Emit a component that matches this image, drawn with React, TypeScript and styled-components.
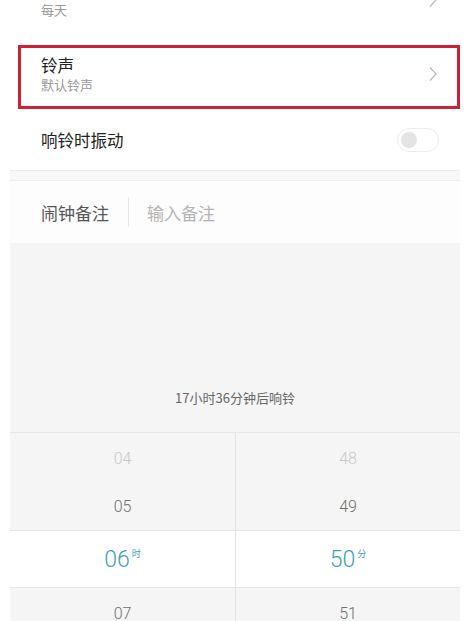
import styled, { createGlobalStyle } from 'styled-components';

const GlobalStyle = createGlobalStyle`
  html, body {
    margin: 0;
    padding: 0;
    background: #fff;
  }
  body {
    font-family: "Noto Sans CJK SC", "Noto Sans", sans-serif;
  }
`;

const Page = styled.div`
  width: 470px;
  height: 621px;
  overflow: hidden;
  background: #fff;
  padding: 0 10px;
  box-sizing: border-box;
`;

const Settings = styled.div`
  display: flex;
  flex-direction: column;
`;

const Row = styled.div<{ $height: number; $lift?: number }>`
  position: relative;
  height: ${props => props.$height}px;
  display: flex;
  align-items: center;
  justify-content: space-between;
  padding: 0 22px ${props => props.$lift ?? 0}px 31px;
  box-sizing: border-box;
`;

const TopRow = styled.div`
  height: 45px;
  display: flex;
  align-items: flex-start;
  justify-content: space-between;
  padding: 1px 22px 0 31px;
  box-sizing: border-box;

  svg {
    margin-top: -9px;
  }
`;

const Highlight = styled.div`
  position: absolute;
  left: 8px;
  right: 0;
  top: 0;
  bottom: 0;
  border: 3px solid #cf2037;
  pointer-events: none;
`;

const Texts = styled.div`
  display: flex;
  flex-direction: column;
`;

const Title = styled.div`
  font-size: 16.5px;
  line-height: 22px;
  color: #222;
`;

const Subtitle = styled.div`
  font-size: 13px;
  line-height: 18px;
  color: #999;
`;

const Chevron = () => (
  <svg width="10" height="16" viewBox="0 0 10 16" fill="none">
    <path d="M2 1.5 L8 8 L2 14.5" stroke="#b8b8b8" strokeWidth="1.2" />
  </svg>
);

const Toggle = styled.div`
  width: 42px;
  height: 24px;
  border-radius: 12px;
  border: 1px solid #ececec;
  background: #fff;
  box-sizing: border-box;
  display: flex;
  align-items: center;
  padding-left: 3px;
  margin-right: -1px;

  &::before {
    content: '';
    width: 16px;
    height: 16px;
    border-radius: 50%;
    background: #e4e4e4;
  }
`;

const Band = styled.div`
  height: 9px;
  background: #f8f8f8;
  border-top: 1px solid #ededed;
  border-bottom: 1px solid #ededed;
`;

const NoteRow = styled.div`
  height: 62px;
  display: flex;
  align-items: center;
  padding-left: 31px;
  font-size: 17px;
  background: #fdfdfd;
`;

const NoteLabel = styled.span`
  color: #555;
`;

const NoteDivider = styled.div`
  width: 1px;
  height: 30px;
  background: #e6e6e6;
  margin: 0 18px 0 19px;
`;

const NoteInput = styled.span`
  color: #b4b4b4;
`;

const Countdown = styled.div`
  height: 190px;
  background: #f5f5f5;
  display: flex;
  align-items: flex-end;
  justify-content: center;
  padding-bottom: 25px;
  box-sizing: border-box;
  border-bottom: 1px solid #e8e8e8;
  font-size: 13px;
  color: #666;
`;

const Picker = styled.div`
  display: grid;
  grid-template-columns: 226px 1fr;
  background: #f5f5f5;
`;

const Column = styled.div<{ $divider?: boolean }>`
  display: flex;
  flex-direction: column;
  border-right: ${props => (props.$divider ? '1px solid #e4e4e4' : 'none')};
`;

const Cell = styled.div<{ $height: number; $tone: 'faint' | 'normal' | 'active' }>`
  height: ${props => props.$height}px;
  display: flex;
  align-items: center;
  justify-content: center;
  font-family: Roboto, "Noto Sans CJK SC", sans-serif;
  font-weight: 300;
  font-size: ${props => (props.$tone === 'active' ? '23px' : '16px')};
  color: ${props =>
    props.$tone === 'active' ? '#3f9fb3' : props.$tone === 'faint' ? '#c8c8c8' : '#6f6f6f'};
  background: ${props => (props.$tone === 'active' ? '#fff' : 'transparent')};
  border-top: ${props => (props.$tone === 'active' ? '1px solid #e6e6e6' : 'none')};
  border-bottom: ${props => (props.$tone === 'active' ? '1px solid #e6e6e6' : 'none')};
  box-sizing: border-box;
`;

const Unit = styled.span`
  font-family: "Noto Sans CJK SC", sans-serif;
  font-size: 9px;
  line-height: 10px;
  font-weight: 400;
  margin: 0 0 11px 2px;
`;

const hours = ['04', '05', '06', '07'];
const minutes = ['48', '49', '50', '51'];
const heights = [50, 47, 58, 50];
const tones: Array<'faint' | 'normal' | 'active'> = ['faint', 'normal', 'active', 'normal'];

export default function App() {
  return (
    <>
      <GlobalStyle />
      <Page>
        <Settings>
          <TopRow>
            <Subtitle>每天</Subtitle>
            <Chevron />
          </TopRow>
          <Row $height={64} $lift={6}>
            <Texts>
              <Title>铃声</Title>
              <Subtitle>默认铃声</Subtitle>
            </Texts>
            <Chevron />
            <Highlight />
          </Row>
          <Row $height={61}>
            <Title>响铃时振动</Title>
            <Toggle />
          </Row>
        </Settings>
        <Band />
        <NoteRow>
          <NoteLabel>闹钟备注</NoteLabel>
          <NoteDivider />
          <NoteInput>输入备注</NoteInput>
        </NoteRow>
        <Countdown>17小时36分钟后响铃</Countdown>
        <Picker>
          <Column $divider>
            {hours.map((h, i) => (
              <Cell key={h} $height={heights[i]} $tone={tones[i]}>
                {h}
                {tones[i] === 'active' && <Unit>时</Unit>}
              </Cell>
            ))}
          </Column>
          <Column>
            {minutes.map((m, i) => (
              <Cell key={m} $height={heights[i]} $tone={tones[i]}>
                {m}
                {tones[i] === 'active' && <Unit>分</Unit>}
              </Cell>
            ))}
          </Column>
        </Picker>
      </Page>
    </>
  );
}
